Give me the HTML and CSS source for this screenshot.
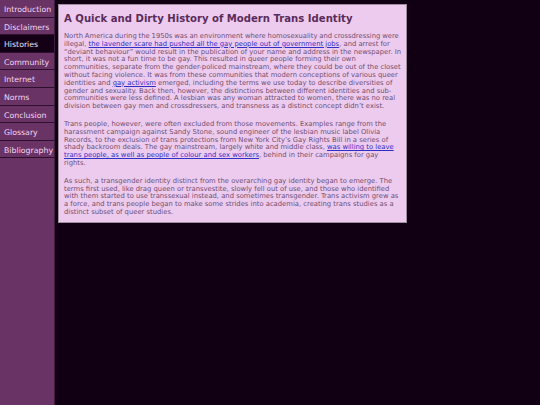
FILE: index.html
```html
<!DOCTYPE html>
<html>
<head>
<meta charset="utf-8">
<title>Histories</title>
<link rel="stylesheet" href="styles.css">
</head>
<body>
<div class="page">
  <nav class="sidebar">
    <a class="nav-item" href="#">Introduction</a>
    <a class="nav-item" href="#">Disclaimers</a>
    <a class="nav-item active" href="#">Histories</a>
    <a class="nav-item" href="#">Community</a>
    <a class="nav-item" href="#">Internet</a>
    <a class="nav-item" href="#">Norms</a>
    <a class="nav-item" href="#">Conclusion</a>
    <a class="nav-item" href="#">Glossary</a>
    <a class="nav-item" href="#">Bibliography</a>
  </nav>
  <main class="content">
    <h1 class="title">A Quick and Dirty History of Modern Trans Identity</h1>
    <p class="para lead">North America during the 1950s was an environment where homosexuality and crossdressing were illegal, <a class="link" href="#">the lavender scare had pushed all the gay people out of government jobs</a>, and arrest for “deviant behaviour” would result in the publication of your name and address in the newspaper. In short, it was not a fun time to be gay. This resulted in queer people forming their own communities, separate from the gender-policed mainstream, where they could be out of the closet without facing violence. It was from these communities that modern conceptions of various queer identities and <a class="link" href="#">gay activism</a> emerged, including the terms we use today to describe diversities of gender and sexuality. Back then, however, the distinctions between different identities and sub-communities were less defined. A lesbian was any woman attracted to women, there was no real division between gay men and crossdressers, and transness as a distinct concept didn’t exist.</p>
    <p class="para narrow">Trans people, however, were often excluded from those movements. Examples range from the harassment campaign against Sandy Stone, sound engineer of the lesbian music label Olivia Records, to the exclusion of trans protections from New York City’s Gay Rights Bill in a series of shady backroom deals. The gay mainstream, largely white and middle class, <a class="link" href="#">was willing to leave trans people, as well as people of colour and sex workers</a>, behind in their campaigns for gay rights.</p>
    <p class="para">As such, a transgender identity distinct from the overarching gay identity began to emerge. The terms first used, like drag queen or transvestite, slowly fell out of use, and those who identified with them started to use transsexual instead, and sometimes transgender. Trans activism grew as a force, and trans people began to make some strides into academia, creating trans studies as a distinct subset of queer studies.</p>
  </main>
</div>
</body>
</html>
```

FILE: styles.css
```css
html, body {
  margin: 0;
  padding: 0;
  height: 100%;
}
body {
  background: #110013;
  font-family: "DejaVu Sans", Verdana, sans-serif;
}
.page {
  display: flex;
  align-items: flex-start;
  min-height: 100%;
}
.sidebar {
  width: 54px;
  flex: 0 0 54px;
  align-self: stretch;
  background: #693366;
  border-right: 1px solid #3d1c3d;
  display: flex;
  flex-direction: column;
  min-height: 405px;
}
.nav-item {
  display: block;
  height: 16.6px;
  line-height: 20px;
  padding-left: 4px;
  font-size: 7.8px;
  color: #f2d6f2;
  text-decoration: none;
  border-bottom: 1px solid #2e102e;
  white-space: nowrap;
  overflow: hidden;
}
.nav-item.active {
  background: #130016;
  color: #eee4ee;
}
.content {
  width: 339px;
  margin: 4px 0 0 3px;
  padding: 5px 3px 5px 5px;
  background: #edcbef;
  border: 1px solid #a08ea0;
}
.title {
  margin: 3px 0 9px 0;
  font-size: 10.1px;
  font-weight: bold;
  color: #5a2b5a;
}
.para {
  margin: 0 0 10px 0;
  font-size: 6.8px;
  line-height: 7.8px;
  color: #6e4f70;
}
.lead::first-line {
  word-spacing: -0.3px;
}
.narrow {
  margin-right: 1px;
}
.para:last-child {
  margin-bottom: 0;
}
.link {
  color: #2f2fc8;
  text-decoration: underline;
}
```
